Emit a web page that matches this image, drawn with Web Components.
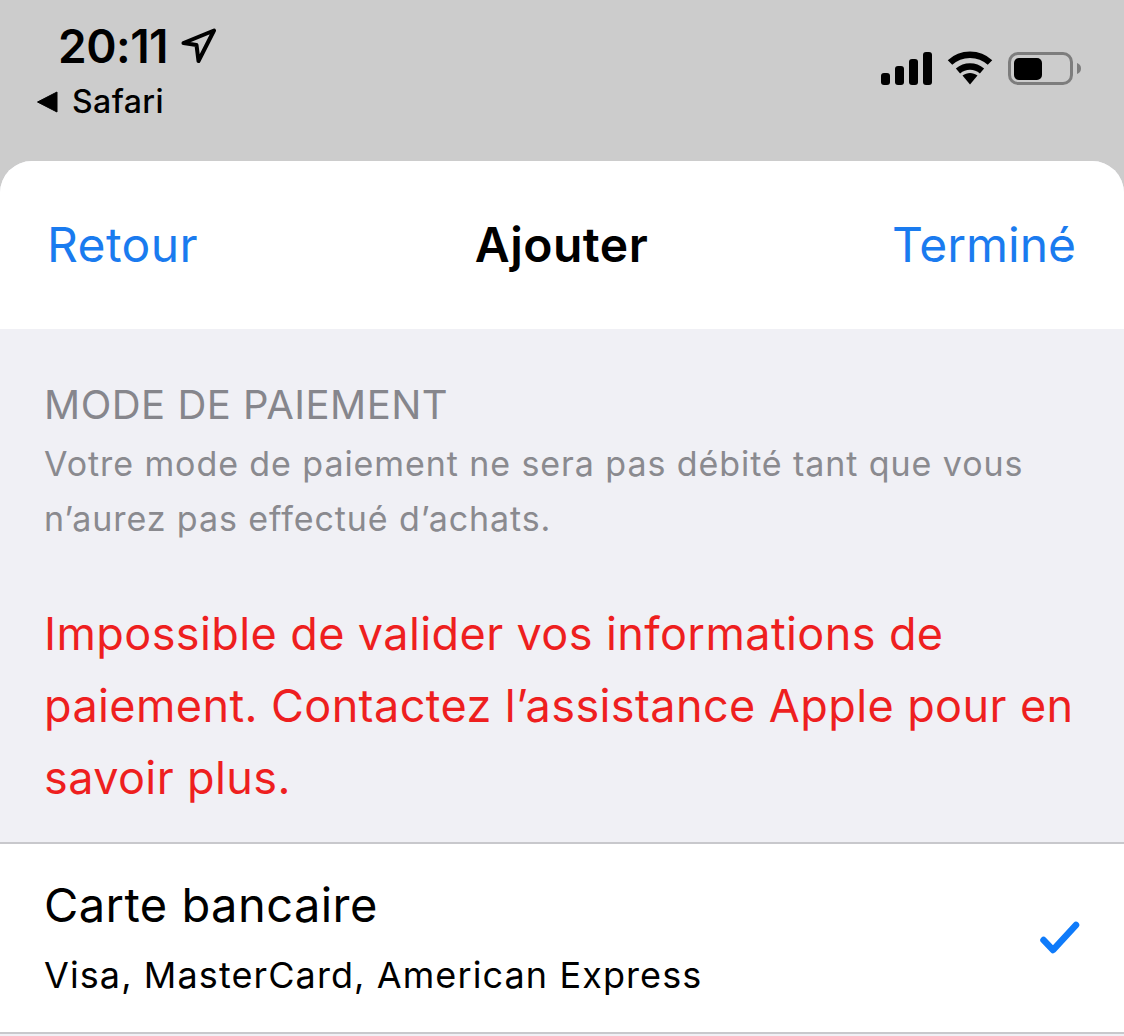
<!DOCTYPE html>
<html lang="fr">
<head>
<meta charset="utf-8">
<title>Ajouter</title>
<style>
  html, body { margin: 0; background: #f0f0f5; }
  body { width: 1124px; height: 1036px; overflow: hidden; font-family: Inter, "Liberation Sans", sans-serif; }
</style>
</head>
<body>
<status-bar></status-bar>
<payment-sheet>
  <nav-bar slot="nav" back="Retour" title="Ajouter" done="Terminé"></nav-bar>
  <payment-notice>
    <span slot="heading">MODE DE PAIEMENT</span>
    <span slot="detail">Votre mode de paiement ne sera pas débité tant que vous<br>n’aurez pas effectué d’achats.</span>
    <span slot="error">Impossible de valider vos informations de<br>paiement. Contactez l’assistance Apple pour en<br>savoir plus.</span>
  </payment-notice>
  <payment-row label="Carte bancaire" detail="Visa, MasterCard, American Express"></payment-row>
</payment-sheet>

<script>
class StatusBar extends HTMLElement {
  constructor() {
    super();
    this.attachShadow({ mode: 'open' });
    this.shadowRoot.innerHTML = `
      <style>
        :host { display: flex; justify-content: space-between; box-sizing: border-box; height: 161px; background: #cccccc; color: #000; padding: 20px 43px 0 36px; }
        .left { display: flex; flex-direction: column; }
        .time { display: flex; align-items: center; gap: 13px; margin-left: 22px; font-size: 46px; line-height: 52px; font-weight: 600; letter-spacing: -0.5px; }
        .back { display: flex; align-items: center; gap: 14px; margin-top: 13px; font-size: 32px; line-height: 34px; font-weight: 500; letter-spacing: .4px; }
        .right { display: flex; align-items: center; gap: 15px; height: 96px; }
        svg { display: block; }
      </style>
      <div class="left">
        <div class="time">20:11
          <svg width="36" height="36" viewBox="0 0 36 36"><path d="M2.5 15 L33 2.5 L17.5 33 L15.5 17 Z" fill="none" stroke="#000" stroke-width="4" stroke-linejoin="round"/></svg>
        </div>
        <div class="back">
          <svg width="22" height="22" viewBox="0 0 22 22"><path d="M21 1 V21 L1.5 11 Z" fill="#000" stroke="#000" stroke-width="1" stroke-linejoin="round"/></svg>
          <span>Safari</span>
        </div>
      </div>
      <div class="right">
        <svg width="51" height="33" viewBox="0 0 51 33" fill="#000">
          <rect x="0" y="21" width="9" height="12" rx="3"/>
          <rect x="14" y="14" width="9" height="19" rx="3"/>
          <rect x="28" y="7" width="9" height="26" rx="3"/>
          <rect x="42" y="0" width="9" height="33" rx="3"/>
        </svg>
        <svg width="46" height="34" viewBox="0 0 46 34" fill="none" stroke="#000" stroke-width="6.5">
          <path d="M3 11.5 C14 1 32 1 43 11.5"/>
          <path d="M11 20 C18 14 28 14 35 20"/>
          <path d="M15.5 24.5 L23 33.5 L30.5 24.5 C26 21 20 21 15.5 24.5 Z" fill="#000" stroke="none"/>
        </svg>
        <svg width="73" height="33" viewBox="0 0 73 33">
          <rect x="1.5" y="1.5" width="62" height="30" rx="8.5" fill="none" stroke="#7d7d7d" stroke-width="3"/>
          <rect x="6" y="6" width="28" height="22" rx="5" fill="#000"/>
          <path d="M69 11 C72 12 73 14 73 16.5 C73 19 72 21 69 22 Z" fill="#7d7d7d"/>
        </svg>
      </div>`;
  }
}

class PaymentSheet extends HTMLElement {
  constructor() {
    super();
    this.attachShadow({ mode: 'open' });
    this.shadowRoot.innerHTML = `
      <style>
        :host { display: block; background: #cccccc; }
        .sheet { background: #f0f0f5; border-radius: 32px 32px 0 0; overflow: hidden; height: 875px; }
      </style>
      <div class="sheet"><slot name="nav"></slot><slot></slot></div>`;
  }
}

class NavBar extends HTMLElement {
  constructor() {
    super();
    this.attachShadow({ mode: 'open' });
  }
  connectedCallback() {
    this.shadowRoot.innerHTML = `
      <style>
        :host { display: flex; align-items: center; justify-content: space-between; box-sizing: border-box; height: 168px; padding: 0 48px 2px 47px; background: #fff; font-size: 48px; }
        .link { color: #1a7bef; width: 210px; letter-spacing: .4px; }
        .link.end { text-align: right; letter-spacing: 0; }
        .title { color: #000; font-weight: 600; letter-spacing: .5px; }
      </style>
      <div class="link">${this.getAttribute('back')}</div>
      <div class="title">${this.getAttribute('title')}</div>
      <div class="link end">${this.getAttribute('done')}</div>`;
  }
}

class PaymentNotice extends HTMLElement {
  constructor() {
    super();
    this.attachShadow({ mode: 'open' });
    this.shadowRoot.innerHTML = `
      <style>
        :host { display: block; box-sizing: border-box; height: 513px; padding: 51px 0 0 44px; background: #f0f0f5; }
        .heading { color: #86868c; font-size: 40px; line-height: 50px; letter-spacing: .5px; }
        .detail { color: #8a8a8f; font-size: 34px; line-height: 55px; margin-top: 6px; letter-spacing: .92px; }
        .error { color: #ee1f1f; font-size: 45px; line-height: 72px; margin-top: 52px; letter-spacing: .4px; }
      </style>
      <div class="heading"><slot name="heading"></slot></div>
      <div class="detail"><slot name="detail"></slot></div>
      <div class="error"><slot name="error"></slot></div>`;
  }
}

class PaymentRow extends HTMLElement {
  constructor() {
    super();
    this.attachShadow({ mode: 'open' });
  }
  connectedCallback() {
    this.shadowRoot.innerHTML = `
      <style>
        :host { display: flex; align-items: center; justify-content: space-between; box-sizing: border-box; height: 192px; padding: 0 44px 0 44px; background: #fff; border-top: 2px solid #c8c8cc; border-bottom: 2px solid #c8c8cc; color: #000; }
        .label { font-size: 47px; line-height: 60px; letter-spacing: .45px; }
        .detail { font-size: 36px; line-height: 52px; margin-top: 14px; letter-spacing: 1.1px; }
        svg { display: block; }
      </style>
      <div>
        <div class="label">${this.getAttribute('label')}</div>
        <div class="detail">${this.getAttribute('detail')}</div>
      </div>
      <svg width="40" height="34" viewBox="0 0 40 34"><path d="M3.5 19 L13 29 L36 4" fill="none" stroke="#0f7bfa" stroke-width="6.5" stroke-linecap="round" stroke-linejoin="round"/></svg>`;
  }
}

customElements.define('status-bar', StatusBar);
customElements.define('payment-sheet', PaymentSheet);
customElements.define('nav-bar', NavBar);
customElements.define('payment-notice', PaymentNotice);
customElements.define('payment-row', PaymentRow);
</script>
</body>
</html>
